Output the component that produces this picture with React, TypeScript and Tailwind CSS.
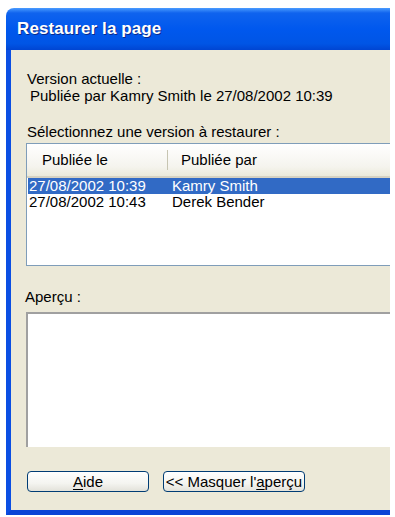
import { FC } from 'react';

const rows = [
  { date: '27/08/2002 10:39', author: 'Kamry Smith', selected: true },
  { date: '27/08/2002 10:43', author: 'Derek Bender', selected: false },
];

const XpButton: FC<{ className?: string; children: React.ReactNode }> = ({ className, children }) => (
  <button
    className={`h-[21px] rounded-[4px] border border-[#003c74] bg-[linear-gradient(180deg,#ffffff_0%,#f4f4f0_60%,#e3e2da_100%)] text-[15px] leading-none text-black ${className ?? ''}`}
  >
    {children}
  </button>
);

const App: FC = () => {
  return (
    <div className="w-[395px] h-[517px] bg-white pt-[8px] pl-[6px] overflow-hidden font-['Liberation_Sans',Arial,sans-serif]">
      <div className="w-[384px] h-[507px] flex flex-col rounded-tl-[8px] overflow-hidden">
        {/* Title bar */}
        <div className="h-[42px] shrink-0 flex items-center pl-[11px] bg-[linear-gradient(180deg,#4a9bff_0%,#0f63ee_12%,#0058ee_50%,#0055e5_85%,#0045d2_100%)]">
          <span className="text-white font-bold text-[17px] tracking-[0.1px] [text-shadow:1px_1px_0_#0a2a8a]">
            Restaurer la page
          </span>
        </div>

        {/* Body */}
        <div className="flex-1 flex flex-col border-l-[5px] border-l-[#0b4fe3] border-b-[5px] border-b-[#0a45d6] bg-[#ece9d8] text-[15px] text-black">
          <div className="shrink-0 pl-[16px] pt-[20px] leading-[17px]">
            <div>Version actuelle :</div>
            <div className="pl-[3px]">Publiée par Kamry Smith le 27/08/2002 10:39</div>
          </div>

          <div className="shrink-0 pl-[16px] pt-[19px] leading-[17px]">Sélectionnez une version à restaurer :</div>

          {/* Version list */}
          <div className="shrink-0 ml-[15px] mt-[3px] h-[123px] border border-r-0 border-[#7f9db9] bg-white">
            <div className="h-[34px] flex items-center bg-[linear-gradient(180deg,#ffffff_0%,#f5f4ee_70%,#ebeadb_100%)] border-b-[2px] border-[#d6d2c2]">
              <div className="w-[140px] pl-[15px]">Publiée le</div>
              <div className="w-px h-[20px] bg-[#c7c5b2]" />
              <div className="pl-[13px]">Publiée par</div>
            </div>
            <div>
              {rows.map((r) => (
                <div
                  key={r.date}
                  className={`h-[16px] flex items-center leading-[16px] ml-[1px] ${
                    r.selected ? 'bg-[#316ac5] text-white' : 'text-black'
                  }`}
                >
                  <div className="w-[144px] pl-[1px]">{r.date}</div>
                  <div>{r.author}</div>
                </div>
              ))}
            </div>
          </div>

          <div className="shrink-0 pl-[14px] pt-[22px] leading-[17px]">Aperçu :</div>

          {/* Preview */}
          <div className="shrink-0 ml-[15px] mt-[7px] h-[135px] border-t-2 border-l-2 border-t-[#a0a0a0] border-l-[#a0a0a0] bg-white" />

          <div className="flex-1 flex items-start pl-[16px] pt-[24px] gap-[14px]">
            <XpButton className="w-[122px]">
              <span className="underline underline-offset-2">A</span>ide
            </XpButton>
            <XpButton className="w-[142px]">
              {'<< Masquer l\''}
              <span className="underline underline-offset-2">a</span>perçu
            </XpButton>
          </div>
        </div>
      </div>
    </div>
  );
};

export default App;
